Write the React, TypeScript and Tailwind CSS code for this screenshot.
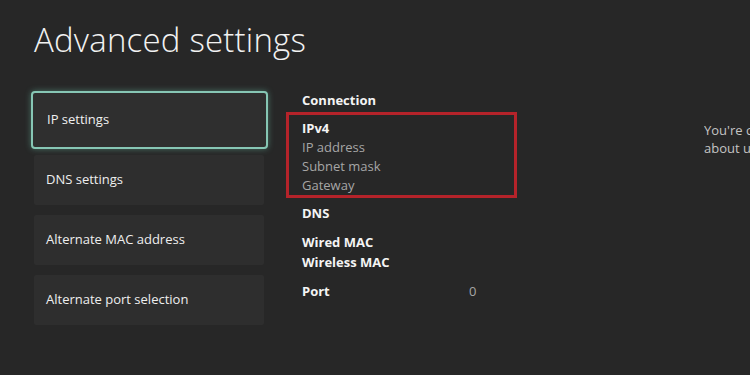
import React from "react";

const menuItems = [
  "IP settings",
  "DNS settings",
  "Alternate MAC address",
  "Alternate port selection",
];

const App: React.FC = () => {
  return (
    <div
      className="w-[750px] h-[375px] bg-[#272727] text-white overflow-hidden relative"
      style={{ fontFamily: '"Open Sans", "Noto Sans", "Liberation Sans", sans-serif' }}
    >
      <h1 className="pl-[34px] pt-[19px] text-[33px] leading-[42px] font-light tracking-[0.2px] text-[#f2f2f2]">
        Advanced settings
      </h1>

      <div className="flex mt-[30px]">
        {/* MENU */}
        <div className="flex flex-col pl-[31px] w-[270px]">
          {menuItems.map((item, i) =>
            i === 0 ? (
              <div
                key={item}
                className="w-[237px] h-[58px] flex items-center pl-[14px] rounded-[4px] border-2 border-[#86c6b4] bg-[#2f2f2f] shadow-[0_0_6px_rgba(110,200,175,0.45)] text-[13px] text-[#f0f0f0]"
              >
                {item}
              </div>
            ) : (
              <div
                key={item}
                className="ml-[3px] w-[230px] h-[50px] flex items-center pl-[12px] rounded-[2px] bg-[#2e2e2e] text-[13px] text-[#eeeeee]"
                style={{ marginTop: i === 1 ? 6 : 10 }}
              >
                {item}
              </div>
            )
          )}
        </div>

        {/* DETAILS */}
        <div className="flex flex-col pl-[32px] text-[13px] leading-[19px]">
          <div className="font-bold text-[#f4f4f4]">Connection</div>

          <div className="relative mt-[9px] flex flex-col">
            <div className="absolute left-[-16px] top-[-7px] w-[231px] h-[86px] border-[3px] border-[#b5232a]"></div>
            <div className="font-bold text-[#f4f4f4]">IPv4</div>
            <div className="text-[#a6a6a6]">IP address</div>
            <div className="text-[#a6a6a6]">Subnet mask</div>
            <div className="text-[#a6a6a6]">Gateway</div>
          </div>

          <div className="font-bold text-[#f4f4f4] mt-[9px]">DNS</div>

          <div className="font-bold text-[#f4f4f4] mt-[10px]">Wired MAC</div>
          <div className="font-bold text-[#f4f4f4] mt-[1px]">Wireless MAC</div>

          <div className="flex mt-[10px]">
            <div className="font-bold text-[#f4f4f4] w-[167px]">Port</div>
            <div className="text-[#a6a6a6]">0</div>
          </div>
        </div>

        {/* INFO */}
        <div className="ml-auto w-[46px] pt-[30px] text-[13px] leading-[18px] text-[#c4c4c4] whitespace-nowrap overflow-hidden">
          <div>You're c</div>
          <div>about u</div>
        </div>
      </div>
    </div>
  );
};

export default App;
